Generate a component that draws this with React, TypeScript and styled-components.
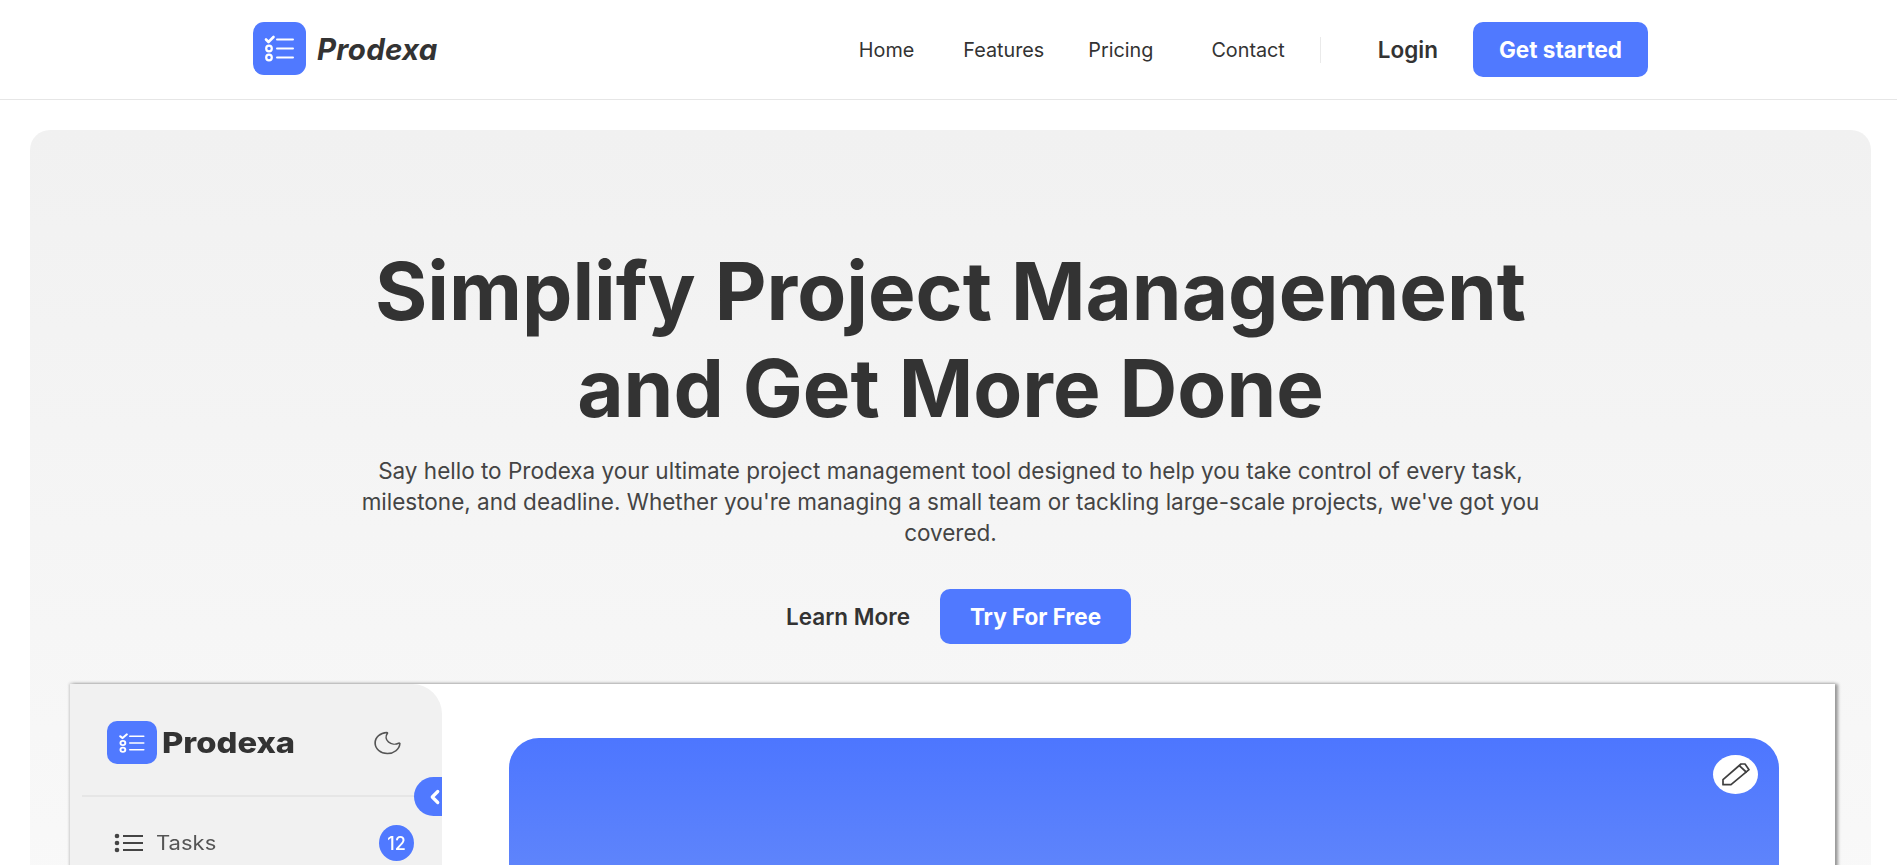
import React from 'react';
import styled, { createGlobalStyle } from 'styled-components';
import { ChevronLeft, Moon } from 'lucide-react';

const BLUE = '#5079ff';
const INK = '#333333';

const GlobalStyle = createGlobalStyle`
  html, body {
    margin: 0;
    padding: 0;
    height: 100%;
    overflow: hidden;
    background: #fff;
    font-family: Inter, "Liberation Sans", sans-serif;
    color: ${INK};
  }
  * { box-sizing: border-box; }
`;

const Page = styled.div`
  height: 865px;
  overflow: hidden;
  background: #fff;
`;

const Header = styled.header`
  height: 100px;
  border-bottom: 1px solid #e6e6e6;
  padding: 22px 249px 0 253px;
  display: flex;
  align-items: flex-start;
`;

const Brand = styled.div`
  display: flex;
  align-items: center;
  gap: 11px;
  height: 53px;
`;

const LogoBox = styled.div<{ $width: number; $height: number; $radius: number }>`
  width: ${p => p.$width}px;
  height: ${p => p.$height}px;
  border-radius: ${p => p.$radius}px;
  background: ${BLUE};
  display: flex;
  align-items: center;
  justify-content: center;
  flex-shrink: 0;
`;

const BrandName = styled.span`
  font-size: 29.5px;
  font-weight: 700;
  font-style: italic;
  letter-spacing: 0.2px;
`;

const Nav = styled.nav`
  margin-left: auto;
  display: flex;
  align-items: center;
  height: 55px;
`;

const NavLink = styled.a<{ $left: number }>`
  margin-left: ${p => p.$left}px;
  font-size: 19.8px;
  font-weight: 400;
  color: ${INK};
`;

const NavDivider = styled.span`
  width: 1px;
  height: 26px;
  background: #eaeaea;
  margin-left: 35px;
`;

const LoginLink = styled.a`
  margin-left: 57px;
  font-size: 22.5px;
  font-weight: 600;
  color: ${INK};
`;

const PrimaryButton = styled.button<{ $width: number; $height: number; $left: number }>`
  width: ${p => p.$width}px;
  height: ${p => p.$height}px;
  margin-left: ${p => p.$left}px;
  border: 0;
  border-radius: 10px;
  background: ${BLUE};
  color: #fff;
  font-family: inherit;
  font-size: 22.5px;
  font-weight: 700;
`;

const Hero = styled.section`
  margin: 30px 26px 0 30px;
  height: 800px;
  border-radius: 20px;
  padding: 112px 40px 0;
  background: linear-gradient(180deg, #f1f1f1 0%, #f9f9f9 100%);
  display: flex;
  flex-direction: column;
  align-items: center;
`;

const Title = styled.h1`
  margin: 0;
  width: 1240px;
  font-size: 80px;
  line-height: 97px;
  font-weight: 700;
  text-align: center;
  color: ${INK};
`;

const Lead = styled.p`
  margin: 19px 0 0;
  width: 1190px;
  font-size: 22.5px;
  line-height: 31px;
  font-weight: 400;
  text-align: center;
  color: #444;
`;

const Actions = styled.div`
  margin-top: 41px;
  padding-left: 16px;
  display: flex;
  align-items: center;
`;

const LearnMore = styled.a`
  font-size: 22.5px;
  font-weight: 600;
  color: ${INK};
`;

const Preview = styled.div`
  margin-top: 40px;
  align-self: flex-start;
  width: 1765px;
  height: 400px;
  background: #fff;
  display: flex;
  box-shadow: 3px 0 3px #9a9a9a, 0 -1px 3px #cfcfcf, -1px 0 2px #d8d8d8;
  filter: blur(0.4px);
`;

const Sidebar = styled.aside`
  position: relative;
  width: 372px;
  height: 400px;
  background: #f1f1f1;
  border-top-right-radius: 30px;
  padding: 37px 28px 0 12px;
`;

const SidebarBrand = styled.div`
  display: flex;
  align-items: center;
  padding: 0 0 0 25px;
  height: 43px;
`;

// the app shot in the reference is a horizontally stretched image
const SidebarName = styled.span`
  margin-left: 5px;
  font-size: 29px;
  font-weight: 800;
  transform: scaleX(1.13);
  transform-origin: left center;
`;

const MoonSlot = styled.div`
  margin-left: auto;
  padding-right: 10px;
  display: flex;
  color: #555;
`;

const SidebarRule = styled.div`
  margin: 31px -28px 0 0;
  height: 2px;
  background: #e6e6e6;
`;

const ToggleTab = styled.div`
  position: absolute;
  right: 0;
  top: 93px;
  width: 28px;
  height: 39px;
  overflow: hidden;
  border-radius: 20px 0 0 20px;
  background: ${BLUE};
  color: #fff;
  display: flex;
  align-items: center;
  justify-content: flex-end;
`;

const ToggleChevron = styled(ChevronLeft)`
  flex-shrink: 0;
  margin-right: -4px;
`;

const TaskRow = styled.div`
  margin-top: 28px;
  padding: 0 0 0 32px;
  display: flex;
  align-items: center;
  color: #555;
  font-size: 19.5px;
`;

const TaskLabel = styled.span`
  margin-left: 12px;
  transform: scaleX(1.13);
  transform-origin: left center;
`;

const Badge = styled.span`
  margin-left: auto;
  width: 35px;
  height: 36px;
  border-radius: 50%;
  background: ${BLUE};
  color: #fff;
  font-size: 18px;
  font-weight: 500;
  display: flex;
  align-items: center;
  justify-content: center;
`;

const Main = styled.div`
  flex: 1;
  padding: 54px 56px 0 67px;
`;

const Cover = styled.div`
  position: relative;
  height: 346px;
  border-radius: 30px 30px 0 0;
  background: linear-gradient(180deg, #4d76ff 0, #5e84fb 128px);
`;

const EditButton = styled.div`
  position: absolute;
  top: 17px;
  right: 21px;
  width: 45px;
  height: 39px;
  border-radius: 50%;
  background: #fff;
  display: flex;
  align-items: center;
  justify-content: center;
`;

const ChecklistIcon = ({ width, height }: { width: number; height: number }) => (
  <svg width={width} height={height} viewBox="0 0 53 53" preserveAspectRatio="none" fill="none" stroke="#fff" strokeWidth="2" strokeLinecap="round" strokeLinejoin="round">
    <path d="M13 17.5l2.5 2.5 5-5" strokeWidth="2.6" />
    <path d="M24 17.500h16M24 26.500h16M24 35.500h16" />
    <circle cx="16" cy="26.500" r="2.800" strokeWidth="2.200" />
    <circle cx="16" cy="35.500" r="2.800" strokeWidth="2.200" />
  </svg>
);

const TaskListIcon = () => (
  <svg width="30" height="20" viewBox="0 0 30 20" fill="none" stroke="#444" strokeWidth="2.2">
    <path d="M9 3h20M9 10h20M9 17h20" />
    <g fill="#444" stroke="none">
      <circle cx="3" cy="3" r="2.300" />
      <circle cx="3" cy="10" r="2.300" />
      <circle cx="3" cy="17" r="2.300" />
    </g>
  </svg>
);

const PencilIcon = () => (
  <svg width="28" height="23" viewBox="0 0 28 23" fill="none" stroke="#3f3f3f" strokeWidth="1.700" strokeLinejoin="round">
    <path d="M1 16.700V21.700H9L27 6.700 23 1 19 1z" />
    <path d="M17.300 2.700L24.700 9.500" />
  </svg>
);

export default function App() {
  return (
    <Page>
      <GlobalStyle />
      <Header>
        <Brand>
          <LogoBox $width={53} $height={53} $radius={11}>
            <ChecklistIcon width={53} height={53} />
          </LogoBox>
          <BrandName>Prodexa</BrandName>
        </Brand>
        <Nav>
          <NavLink $left={0}>Home</NavLink>
          <NavLink $left={49}>Features</NavLink>
          <NavLink $left={44}>Pricing</NavLink>
          <NavLink $left={58}>Contact</NavLink>
          <NavDivider />
          <LoginLink>Login</LoginLink>
          <PrimaryButton $width={175} $height={55} $left={35}>Get started</PrimaryButton>
        </Nav>
      </Header>
      <Hero>
        <Title>Simplify Project Management and Get More Done</Title>
        <Lead>
          Say hello to Prodexa your ultimate project management tool designed to help you take control of every task,
          milestone, and deadline. Whether you're managing a small team or tackling large-scale projects, we've got you
          covered.
        </Lead>
        <Actions>
          <LearnMore>Learn More</LearnMore>
          <PrimaryButton $width={191} $height={55} $left={30}>Try For Free</PrimaryButton>
        </Actions>
        <Preview>
          <Sidebar>
            <SidebarBrand>
              <LogoBox $width={50} $height={43} $radius={10}>
                <ChecklistIcon width={46} height={40} />
              </LogoBox>
              <SidebarName>Prodexa</SidebarName>
              <MoonSlot>
                <Moon width={33} height={28} preserveAspectRatio="none" strokeWidth={1.2} />
              </MoonSlot>
            </SidebarBrand>
            <SidebarRule />
            <ToggleTab>
              <ToggleChevron size={22} strokeWidth={3.5} />
            </ToggleTab>
            <TaskRow>
              <TaskListIcon />
              <TaskLabel>Tasks</TaskLabel>
              <Badge>12</Badge>
            </TaskRow>
          </Sidebar>
          <Main>
            <Cover>
              <EditButton>
                <PencilIcon />
              </EditButton>
            </Cover>
          </Main>
        </Preview>
      </Hero>
    </Page>
  );
}
